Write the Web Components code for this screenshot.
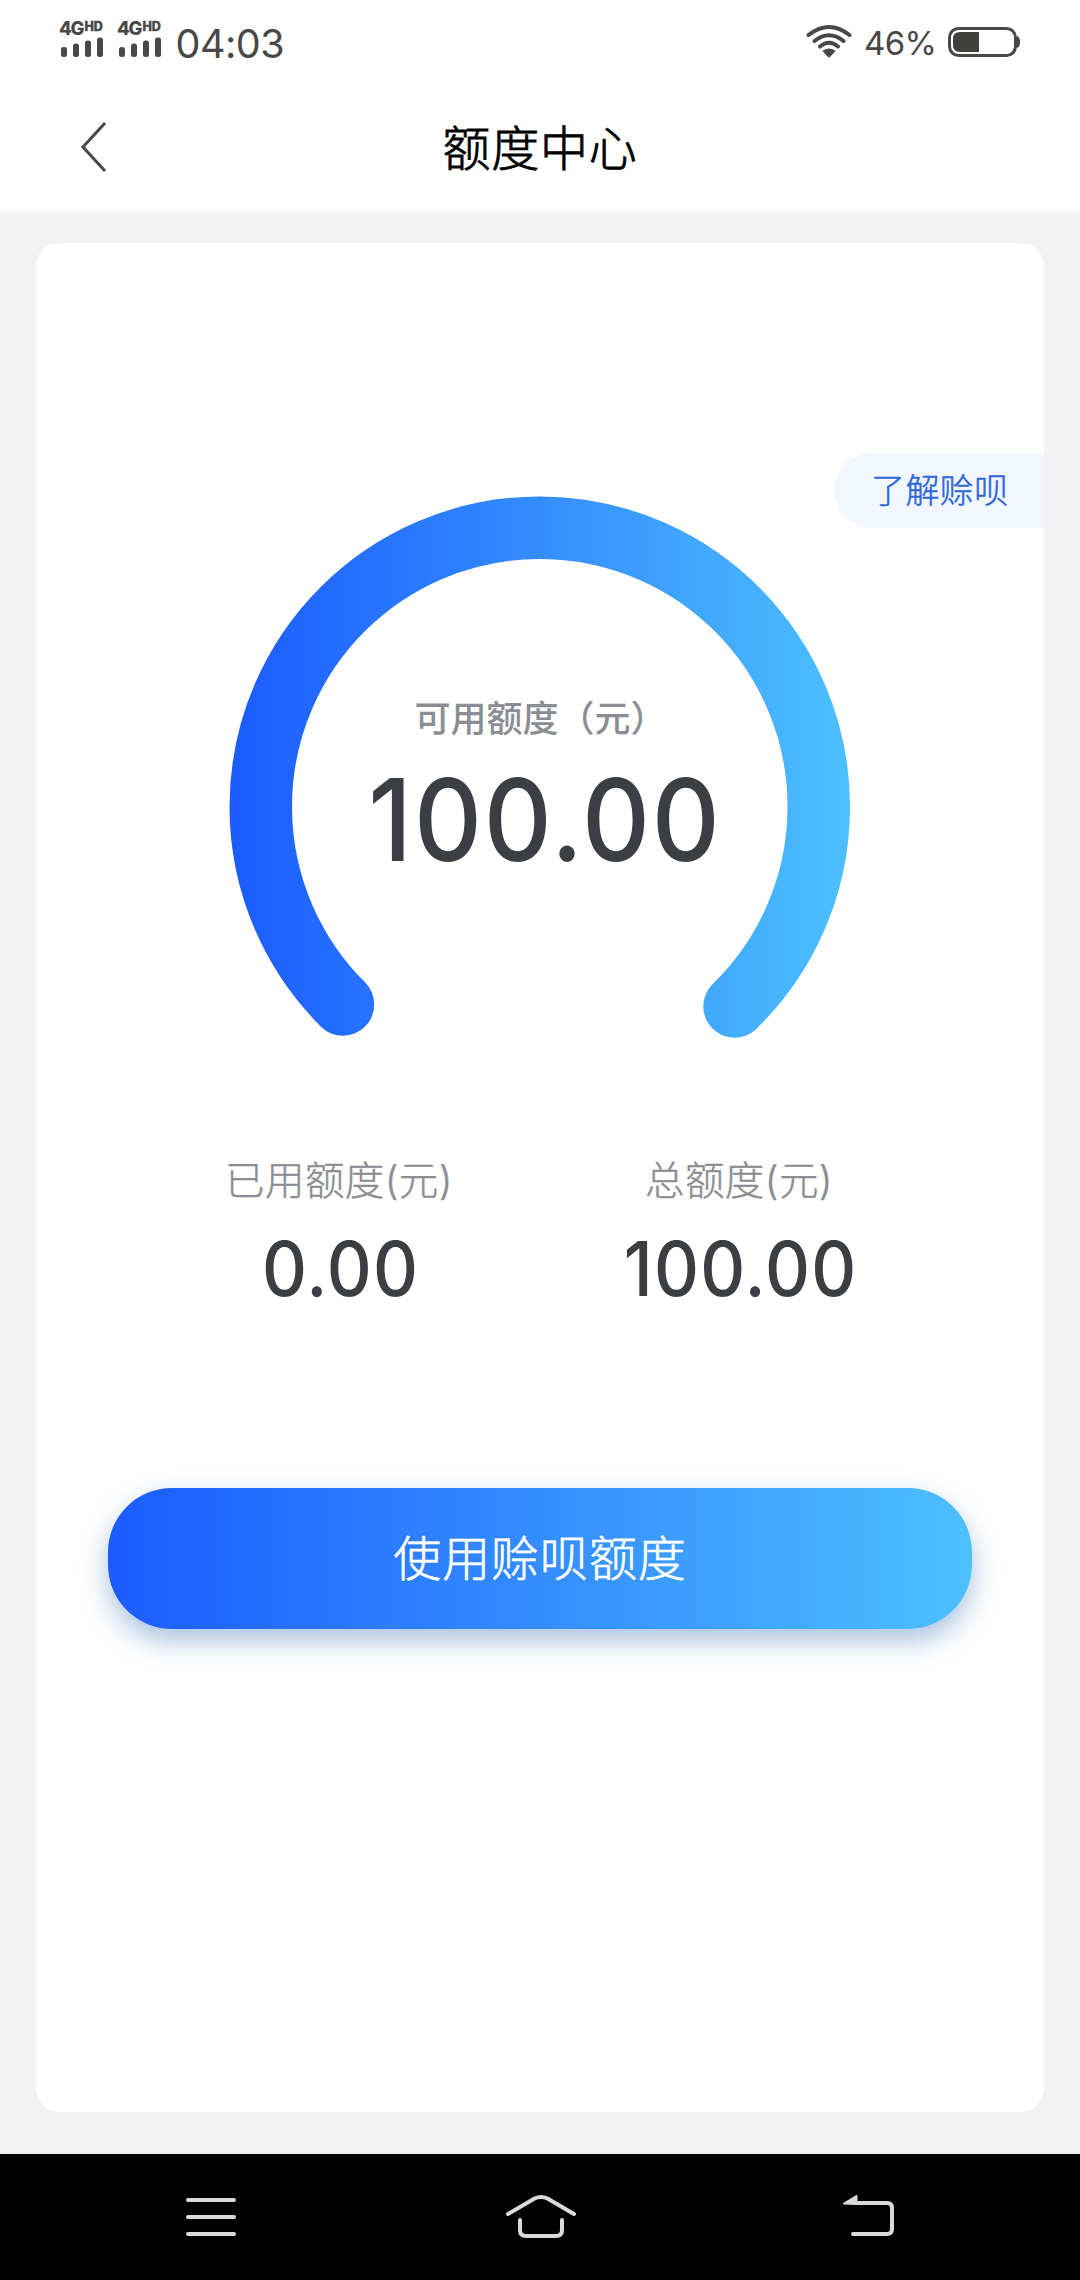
<!DOCTYPE html>
<html lang="zh-CN">
<head>
<meta charset="utf-8">
<title>额度中心</title>
<style>
html,body{margin:0;padding:0}
body{width:1080px;height:2280px;overflow:hidden;background:#f1f1f1;font-family:Inter,"Noto Sans CJK SC",sans-serif;color:#3b3e43}
</style>
</head>
<body>
<credit-app></credit-app>
<script>
function define(name, html) {
  const t = document.createElement('template');
  t.innerHTML = html;
  customElements.define(name, class extends HTMLElement {
    constructor() {
      super();
      this.attachShadow({mode: 'open'}).appendChild(t.content.cloneNode(true));
    }
  });
}

define('signal-icon', `
<style>
:host{display:flex;flex-direction:column;width:46px;color:#484848}
.t{display:flex;align-items:flex-start;height:17px;font-weight:800;line-height:17px}
.g{font-size:18.500px;letter-spacing:-1.200px;width:25.5px;white-space:nowrap}
.h{font-size:12.5px;line-height:14px;letter-spacing:-.2px;-webkit-text-stroke:.4px #484848}
svg{display:block}
</style>
<div class="t"><span class="g">4G</span><span class="h">HD</span></div>
<svg width="46" height="21" viewBox="0 0 46 21" fill="#484848"><rect x="2" y="10" width="6" height="10" rx="2.5"/><rect x="14" y="6.500" width="6" height="13.500" rx="2.500"/><rect x="26" y="3.500" width="6" height="16.500" rx="2.500"/><rect x="38" y="0.500" width="6" height="19.500" rx="2.500"/></svg>`);

define('wifi-icon', `
<style>:host{display:block}svg{display:block}</style>
<svg width="46" height="34" viewBox="0 0 46 34" fill="none" stroke="#484848" stroke-width="4" stroke-linecap="round"><path d="M2.500 11Q23 -5 43.500 11"/><path d="M8.500 17Q23 5.500 37.500 17"/><path d="M14 22.500Q23 15 32 22.500"/><path d="M17.300 27Q23 23.300 28.700 27L23 33Z" fill="#484848" stroke-width="1.200" stroke-linejoin="round"/></svg>`);

define('battery-icon', `
<style>:host{display:block}svg{display:block}</style>
<svg width="74" height="32" viewBox="0 0 74 32"><rect x="1.500" y="2.500" width="66" height="27" rx="9" fill="none" stroke="#484848" stroke-width="3"/><path d="M12 6H31V26H12Q5 26 5 19V13Q5 6 12 6Z" fill="#40413d"/><path d="M69 10Q72 11 72 16T69 22Z" fill="#484848"/></svg>`);

define('status-bar', `
<style>
:host{display:flex;align-items:flex-start;height:84px;box-sizing:border-box;padding:20px 58px 0 59px;color:#484848}
signal-icon{margin-right:12px}
.time{font-size:39.500px;line-height:49px;letter-spacing:-.500px;margin-left:.5px}
.right{display:flex;margin-left:auto}
wifi-icon{margin-top:4px}
.pct{font-size:33px;line-height:47px;letter-spacing:-.600px;width:84px;margin-left:12px;white-space:nowrap}
battery-icon{margin-top:6px}
</style>
<signal-icon></signal-icon><signal-icon></signal-icon><span class="time">04:03</span>
<div class="right"><wifi-icon></wifi-icon><span class="pct">46%</span><battery-icon></battery-icon></div>`);

define('nav-header', `
<style>
:host{display:grid;grid-template-columns:200px 1fr 200px;align-items:center;height:126px;border-bottom:3px solid #f5f5f5}
svg{display:block;margin-left:80px}
h1{margin:0;padding-top:4px;text-align:center;font-size:48px;line-height:60px;font-weight:300;letter-spacing:.8px;color:#000;-webkit-text-stroke:.8px #000}
</style>
<svg width="28" height="52" viewBox="0 0 28 52" fill="none" stroke="#484848" stroke-width="3"><path d="M25 2L3 26L25 50"/></svg>
<h1><slot></slot></h1>`);

define('info-tag', `
<style>
:host{display:flex;align-items:center;box-sizing:border-box;width:210px;height:75px;padding:0 0 5px 37px;border-radius:37.500px 0 0 37.500px;background:#f1f6ff;color:#2d66d9;font-size:34px;font-weight:300;letter-spacing:.4px;-webkit-text-stroke:.5px #2d66d9}
</style><span><slot></slot></span>`);

define('credit-gauge', `
<style>
:host{display:grid;width:622px;height:544px}
svg,.txt{grid-area:1/1}
svg{display:block}
.txt{display:flex;flex-direction:column;align-items:center;padding-top:200px;white-space:nowrap}
.label{font-size:36px;line-height:48px;font-weight:500;color:#8a8d93;padding-left:1px}
.value{font-size:114px;line-height:130px;font-weight:500;letter-spacing:2px;margin:12px 0 0 11px;transform:scaleX(.925)}
</style>
<svg width="622" height="544" viewBox="229 495 622 544">
<defs><linearGradient id="g" gradientUnits="userSpaceOnUse" x1="230" y1="0" x2="850" y2="0"><stop offset="0" stop-color="#1b5bff"/><stop offset=".5" stop-color="#348dff"/><stop offset="1" stop-color="#4dc0ff"/></linearGradient></defs>
<path d="M343 1004.500A279 279 0 1 1 734.500 1006.500" fill="none" stroke="url(#g)" stroke-width="62.500" stroke-linecap="round"/></svg>
<div class="txt"><span class="label"><slot name="label"></slot></span><span class="value"><slot></slot></span></div>`);

define('quota-stat', `
<style>
:host{display:flex;flex-direction:column;align-items:center;width:400px;white-space:nowrap}
.label{font-size:39.500px;line-height:54px;font-weight:300;letter-spacing:.4px;color:#8a8d93;-webkit-text-stroke:.4px #8a8d93;margin:1px 2px 0 0}
.value{font-size:75px;line-height:90px;font-weight:500;letter-spacing:1.300px;margin:16px 0 0 2px;transform:scaleX(.93)}
</style>
<span class="label"><slot name="label"></slot></span><span class="value"><slot></slot></span>`);

define('primary-button', `
<style>
:host{display:block}
button{display:flex;align-items:center;justify-content:center;width:864px;height:141px;padding:0;border:0;border-radius:64px;background:linear-gradient(90deg,#1b5bff,#348dff 50%,#4dc0ff);box-shadow:0 12px 28px rgba(30,95,170,.38);color:#fff;font:300 48px/60px Inter,"Noto Sans CJK SC",sans-serif;letter-spacing:.9px;-webkit-text-stroke:.6px #fff}
</style>
<button><span><slot></slot></span></button>`);

define('credit-card', `
<style>
:host{display:flex;flex-direction:column;align-items:center;box-sizing:border-box;width:1008px;height:1869px;margin:30px 36px 42px;padding-top:210px;border-radius:24px;background:#fff}
info-tag{align-self:flex-end}
credit-gauge{margin-top:-33px}
.stats{display:flex;margin-top:114px}
primary-button{margin-top:174px}
</style>
<info-tag>了解赊呗</info-tag>
<credit-gauge><span slot="label">可用额度（元）</span>100.00</credit-gauge>
<div class="stats">
<quota-stat><span slot="label">已用额度(元)</span>0.00</quota-stat>
<quota-stat><span slot="label">总额度(元)</span>100.00</quota-stat>
</div>
<primary-button>使用赊呗额度</primary-button>`);

define('system-nav', `
<style>
:host{display:flex;justify-content:space-between;align-items:flex-start;box-sizing:border-box;height:126px;padding:36px 182px 0;background:#000}
svg{display:block}
</style>
<svg width="58" height="54" viewBox="182 2190 58 54" stroke="#dadada" stroke-width="4" stroke-linecap="round"><path d="M188 2200H234M188 2217H234M188 2234H234"/></svg>
<svg width="78" height="54" viewBox="501 2190 78 54" fill="none" stroke="#dadada" stroke-width="4" stroke-linecap="round"><path d="M508 2214L534.500 2198.500Q541 2195.500 547.500 2198.500L574 2214M520 2220V2230Q520 2236 526 2236H556Q562 2236 562 2230V2220"/></svg>
<svg width="58" height="54" viewBox="840 2190 58 54" fill="none" stroke="#dadada" stroke-width="4" stroke-linecap="round"><path d="M853 2234H887Q892 2234 892 2229V2208Q892 2203 887 2203H856"/><path d="M844 2203.500L856.500 2196V2204Z" fill="#dadada" stroke-width="2" stroke-linejoin="round"/></svg>`);

define('credit-app', `
<style>
:host{display:flex;flex-direction:column;width:1080px;height:2280px;background:#f1f1f1}
header{background:#fff}
</style>
<header><status-bar></status-bar><nav-header>额度中心</nav-header></header>
<credit-card></credit-card>
<system-nav></system-nav>`);
</script>
</body>
</html>
